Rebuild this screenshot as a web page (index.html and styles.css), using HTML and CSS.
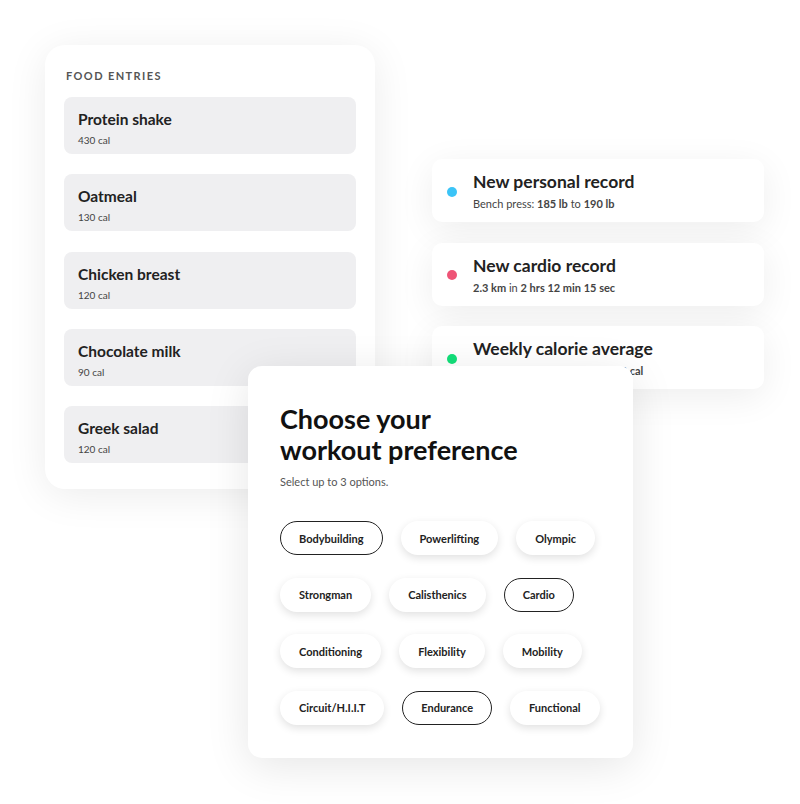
FILE: index.html
```html
<!DOCTYPE html>
<html lang="en">
<head>
    <meta charset="UTF-8">
    <meta name="viewport" content="width=device-width, initial-scale=1.0">
    <title>Fitness Overview</title>
    <link rel="stylesheet" href="styles.css">
</head>
<body>
    <div class="stage">
        <section class="food-card">
            <h2 class="section-label">Food entries</h2>
            <ul class="entries">
                <li class="entry"><span class="entry-name">Protein shake</span><span class="entry-cal">430 cal</span></li>
                <li class="entry"><span class="entry-name">Oatmeal</span><span class="entry-cal">130 cal</span></li>
                <li class="entry"><span class="entry-name">Chicken breast</span><span class="entry-cal">120 cal</span></li>
                <li class="entry"><span class="entry-name">Chocolate milk</span><span class="entry-cal">90 cal</span></li>
                <li class="entry"><span class="entry-name">Greek salad</span><span class="entry-cal">120 cal</span></li>
            </ul>
        </section>

        <div class="notifications">
            <div class="notice">
                <span class="dot dot-blue"></span>
                <div class="notice-body">
                    <div class="notice-title">New personal record</div>
                    <div class="notice-text">Bench press: <b>185 lb</b> to <b>190 lb</b></div>
                </div>
            </div>
            <div class="notice">
                <span class="dot dot-red"></span>
                <div class="notice-body">
                    <div class="notice-title">New cardio record</div>
                    <div class="notice-text"><b>2.3 km</b> in <b>2 hrs 12 min 15 sec</b></div>
                </div>
            </div>
            <div class="notice">
                <span class="dot dot-green"></span>
                <div class="notice-body">
                    <div class="notice-title">Weekly calorie average</div>
                    <div class="notice-text">Average for this week was <b>2550 cal</b></div>
                </div>
            </div>
        </div>

        <section class="workout-card">
            <h1>Choose your<br>workout preference</h1>
            <p class="hint">Select up to 3 options.</p>
            <div class="chips">
                <div class="chip-row">
                    <span class="chip selected">Bodybuilding</span>
                    <span class="chip">Powerlifting</span>
                    <span class="chip">Olympic</span>
                </div>
                <div class="chip-row">
                    <span class="chip">Strongman</span>
                    <span class="chip">Calisthenics</span>
                    <span class="chip selected">Cardio</span>
                </div>
                <div class="chip-row">
                    <span class="chip">Conditioning</span>
                    <span class="chip">Flexibility</span>
                    <span class="chip">Mobility</span>
                </div>
                <div class="chip-row">
                    <span class="chip">Circuit/H.I.I.T</span>
                    <span class="chip selected">Endurance</span>
                    <span class="chip">Functional</span>
                </div>
            </div>
        </section>
    </div>
</body>
</html>
```

FILE: styles.css
```css
* {
    box-sizing: border-box;
    margin: 0;
    padding: 0;
    font-family: 'Lato', 'Open Sans', sans-serif;
}

body {
    background-color: #ffffff;
    color: #222;
}

.stage {
    position: relative;
    width: 800px;
    height: 804px;
}

/* Food entries card */
.food-card {
    position: absolute;
    left: 45px;
    top: 45px;
    width: 330px;
    height: 444px;
    background-color: white;
    border-radius: 20px;
    box-shadow: 0 6px 40px rgba(0, 0, 0, 0.08);
    padding: 24px 19px 0 19px;
}

.section-label {
    font-size: 11px;
    font-weight: 700;
    letter-spacing: 1.4px;
    text-transform: uppercase;
    color: #555;
    margin-left: 2px;
    margin-bottom: 15px;
}

.entries {
    list-style: none;
    display: flex;
    flex-direction: column;
    gap: 20.3px;
}

.entry {
    height: 57px;
    background-color: #efeff1;
    border-radius: 8px;
    padding: 12px 14px 0 14px;
    display: flex;
    flex-direction: column;
}

.entry-name {
    font-size: 15.5px;
    font-weight: 700;
    color: #222;
    line-height: 20px;
}

.entry-cal {
    font-size: 10px;
    color: #444;
    margin-top: 5px;
}

/* Notifications */
.notifications {
    position: absolute;
    left: 432px;
    top: 159px;
    width: 332px;
    display: flex;
    flex-direction: column;
    gap: 20.5px;
}

.notice {
    height: 63px;
    background-color: white;
    border-radius: 10px;
    box-shadow: 0 8px 36px rgba(0, 0, 0, 0.07);
    display: flex;
    align-items: center;
    padding: 0 15px;
    gap: 16px;
}

.dot {
    width: 10px;
    height: 10px;
    border-radius: 50%;
    flex-shrink: 0;
    margin-top: 2px;
}

.dot-blue { background-color: #3bc4f7; }
.dot-red { background-color: #ee5476; }
.dot-green { background-color: #13e07a; }

.notice-title {
    font-size: 17.5px;
    font-weight: 700;
    color: #222;
    line-height: 22px;
}

.notice-text {
    font-size: 11px;
    color: #444;
    margin-top: 4px;
}

.notice-text b {
    font-weight: 700;
}

/* Workout preference card */
.workout-card {
    position: absolute;
    left: 248px;
    top: 366px;
    width: 385px;
    height: 392px;
    background-color: white;
    border-radius: 14px;
    box-shadow: 0 8px 44px rgba(0, 0, 0, 0.1);
    padding: 37px 32px 0 32px;
}

.workout-card h1 {
    font-size: 27px;
    font-weight: 700;
    line-height: 31px;
    color: #111;
}

.hint {
    font-size: 11px;
    color: #555;
    margin-top: 10px;
}

.chips {
    margin-top: 33px;
    display: flex;
    flex-direction: column;
    gap: 22.6px;
}

.chip-row {
    display: flex;
    gap: 18px;
}

.chip {
    height: 34px;
    padding: 0 18px;
    border-radius: 17px;
    background-color: white;
    box-shadow: 0 3px 8px rgba(0, 0, 0, 0.12);
    font-size: 11px;
    font-weight: 700;
    color: #222;
    display: flex;
    align-items: center;
    justify-content: center;
    border: 1.5px solid transparent;
}

.chip.selected {
    border-color: #222;
    box-shadow: none;
}
```
